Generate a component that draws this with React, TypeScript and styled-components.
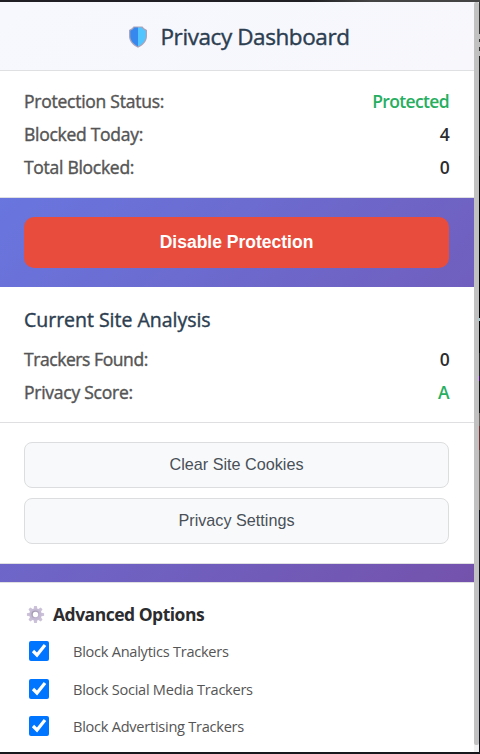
import React from 'react';
import styled, { createGlobalStyle } from 'styled-components';

const GlobalStyle = createGlobalStyle`
  * { box-sizing: border-box; }
  body {
    margin: 0;
    background: #17181c;
    font-family: 'Open Sans', 'Noto Sans', sans-serif;
    color: #2c2c2e;
    overflow: hidden;
  }
`;

const Frame = styled.div`
  display: flex;
  flex-direction: column;
  width: 480px;
  height: 754px;
`;

const TopEdge = styled.div`
  height: 2px;
  flex: none;
  background: linear-gradient(to right, #202024 0, #202024 310px, #444 370px, #444);
`;

const Window = styled.div`
  display: flex;
  height: 750px;
`;

const Popup = styled.main`
  width: 474px;
  background: linear-gradient(135deg, #667eea 0%, #764ba2 100%);
`;

const ScrollTrack = styled.div`
  width: 5px;
  background: #f1f1f1;
`;

const ScrollThumb = styled.div`
  height: 743px;
  border-radius: 2px;
  background: #c1c1c1;
`;

const Backdrop = styled.div`
  width: 1px;
  background: linear-gradient(
    #333 0 32px, #bbb 32px 37px, #333 37px 40px, #bbb 40px 45px, #333 45px 49px,
    #bbb 49px 54px, #222 54px 78px, #111 78px 154px, #000 154px 316px, #9cc 316px 319px,
    #000 319px 351px, #222 351px 374px, #407 374px 379px, #111 379px 411px,
    #665f58 411px 424px, #6b2e2c 424px 448px, #665f58 448px 508px, #0c1014 508px
  );
`;

const Header = styled.header`
  display: flex;
  align-items: center;
  justify-content: center;
  height: 69px;
  padding: 1px 0 0 4px;
  border-bottom: 1px solid #dfe0e2;
  background: linear-gradient(135deg, #f6f8fe, #f7f7fc);
`;

const Title = styled.h1`
  margin: 0 0 0 12px;
  font-size: 22.5px;
  line-height: 30px;
  font-weight: 400;
  -webkit-text-stroke: 0.4px;
  letter-spacing: -0.42px;
  color: #2c3e50;
  white-space: nowrap;
`;

const Section = styled.section<{ $height: number; $pad: string; $top?: boolean; $bottom?: boolean }>`
  height: ${(p) => p.$height}px;
  padding: ${(p) => p.$pad};
  background: #fff;
  border-top: ${(p) => (p.$top ? '1px solid #dfdfe2' : 'none')};
  border-bottom: ${(p) => (p.$bottom ? '1px solid #dfdfe2' : 'none')};
`;

const Row = styled.div`
  display: flex;
  justify-content: space-between;
  height: 33px;
  line-height: 24px;
  font-size: 17.5px;
`;

const Label = styled.span<{ $track: number }>`
  color: #555;
  -webkit-text-stroke: 0.4px;
  letter-spacing: ${(p) => p.$track}px;
`;

const Value = styled.span<{ $good?: boolean }>`
  font-weight: 600;
  letter-spacing: -0.65px;
  color: ${(p) => (p.$good ? '#27ae60' : '#2c2c2e')};
`;

const SectionTitle = styled.h2`
  margin: 0 0 14px;
  font-size: 19.5px;
  line-height: 26px;
  font-weight: 400;
  -webkit-text-stroke: 0.4px;
  letter-spacing: -0.02px;
  color: #2c3e50;
`;

const ToggleArea = styled.div`
  height: 89px;
  padding: 19px 25px 0 24px;
`;

const DangerButton = styled.button`
  display: block;
  width: 100%;
  height: 51px;
  border: 0;
  padding: 0;
  border-radius: 10px;
  background: #e84c3d;
  color: #fff;
  font: 700 17.5px 'Liberation Sans', Arial, sans-serif;
`;

const ActionButton = styled.button`
  display: block;
  width: 100%;
  height: 46px;
  margin-bottom: 10px;
  padding: 0 0 2px;
  border: 1px solid #dcddde;
  border-radius: 8px;
  background: #f8f9fb;
  color: #495057;
  font: 400 16.2px 'Liberation Sans', Arial, sans-serif;
`;

const Divider = styled.div`
  height: 18px;
`;

const AdvancedHeading = styled.h3`
  display: flex;
  align-items: center;
  margin: 0;
  height: 26px;
  font-size: 17.5px;
  font-weight: 700;
  letter-spacing: -0.5px;
  color: #2c2c2e;
  svg { margin: 0 8px 0 2px; }
`;

const Options = styled.div`
  display: flex;
  flex-direction: column;
  gap: 17.5px;
  padding: 14px 0 0 5px;
`;

const Option = styled.label`
  display: flex;
  align-items: center;
  height: 20px;
  font-size: 14.6px;
  color: #555;
  letter-spacing: -0.27px;
  white-space: nowrap;
`;

const Checkbox = styled.input`
  width: 20px;
  height: 20px;
  margin: 0 24px 0 0;
  accent-color: #0075ff;
`;

const ShieldIcon = () => (
  <svg width="20" height="24" viewBox="0 0 20 24">
    <path d="M5.500 1.500h9l1.500 1.800L19 5V11c0 5.500-4 9.500-9 11.800-5-2.300-9-6.300-9-11.800V5L4 3.300z" fill="#aaa3ba" />
    <path d="M10 2.500H6.300L4.900 4.200 2.300 5.700V11c0 4.900 3.400 8 7.700 10.400z" fill="#3688ee" />
    <path d="M10 2.500h3.700l1.400 1.700 2.600 1.500V11c0 4.900-3.400 8-7.700 10.400z" fill="#50c5ff" />
  </svg>
);

const GearIcon = () => (
  <svg width="19" height="19" viewBox="-9.500 -9.500 19 19">
    <defs>
      <linearGradient id="gear" x1="0" y1="0" x2="1" y2="1">
        <stop offset="0" stopColor="#9f96aa" />
        <stop offset="1" stopColor="#c6b8d9" />
      </linearGradient>
    </defs>
    {[0, 45, 90, 135, 180, 225, 270, 315].map((a) => (
      <path key={a} d="M-1.300 -8.600h2.600l.8 3.500h-4.200z" fill="#cbc1d8" transform={`rotate(${a})`} />
    ))}
    <circle r="4.700" fill="none" stroke="#c6bbd5" strokeWidth="2.800" />
    <circle r="3.400" fill="none" stroke="url(#gear)" strokeWidth="1.400" />
  </svg>
);

const OPTIONS = ['Block Analytics Trackers', 'Block Social Media Trackers', 'Block Advertising Trackers'];

export default function App() {
  return (
    <Frame>
      <GlobalStyle />
      <TopEdge />
      <Window>
        <Popup>
          <Header>
            <ShieldIcon />
            <Title>Privacy Dashboard</Title>
          </Header>
          <Section $height={127} $pad="18px 25px 0 24px" $bottom>
            <Row><Label $track={-0.25}>Protection Status:</Label><Value $good>Protected</Value></Row>
            <Row><Label $track={-0.28}>Blocked Today:</Label><Value>4</Value></Row>
            <Row><Label $track={-0.28}>Total Blocked:</Label><Value>0</Value></Row>
          </Section>
          <ToggleArea>
            <DangerButton>Disable Protection</DangerButton>
          </ToggleArea>
          <Section $height={136} $pad="20px 25px 0 24px" $bottom>
            <SectionTitle>Current Site Analysis</SectionTitle>
            <Row><Label $track={-0.43}>Trackers Found:</Label><Value>0</Value></Row>
            <Row><Label $track={-0.25}>Privacy Score:</Label><Value $good>A</Value></Row>
          </Section>
          <Section $height={141} $pad="19px 25px 0 24px" $bottom>
            <ActionButton>Clear Site Cookies</ActionButton>
            <ActionButton>Privacy Settings</ActionButton>
          </Section>
          <Divider />
          <Section $height={170} $pad="18px 25px 0 24px" $top>
            <AdvancedHeading><GearIcon />Advanced Options</AdvancedHeading>
            <Options>
              {OPTIONS.map((text) => (
                <Option key={text}>
                  <Checkbox type="checkbox" defaultChecked />
                  {text}
                </Option>
              ))}
            </Options>
          </Section>
        </Popup>
        <ScrollTrack><ScrollThumb /></ScrollTrack>
        <Backdrop />
      </Window>
    </Frame>
  );
}
